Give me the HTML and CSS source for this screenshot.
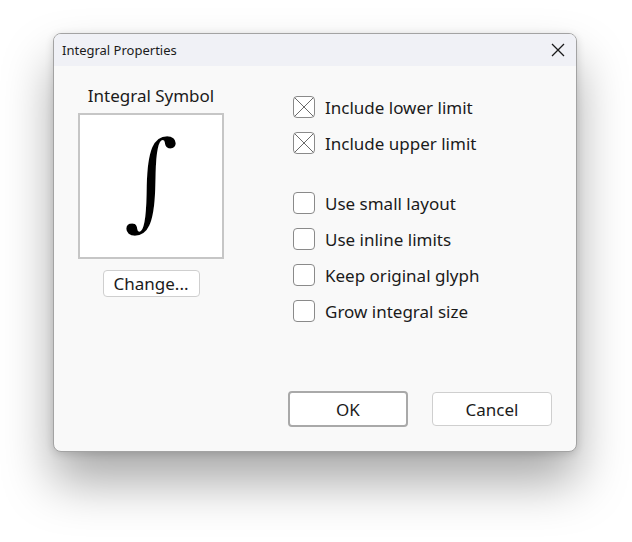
FILE: index.html
```html
<!DOCTYPE html>
<html lang="en">
<head>
  <meta charset="UTF-8" />
  <title>Integral Properties</title>
  <link rel="stylesheet" href="styles.css">
</head>
<body>

  <div class="stage">
    <div class="dialog">
      <div class="titlebar">
        <span class="title">Integral Properties</span>
        <button class="close" aria-label="Close">
          <svg width="14" height="14" viewBox="0 0 14 14">
            <path d="M1 1 L13 13 M13 1 L1 13" stroke="#1a1a1a" stroke-width="1.3" fill="none"/>
          </svg>
        </button>
      </div>

      <div class="content">
        <div class="symbol-col">
          <div class="symbol-label">Integral Symbol</div>
          <div class="symbol-box"><span class="glyph">&#8747;</span></div>
          <button class="btn small">Change...</button>
        </div>

        <div class="options">
          <div class="group">
            <label class="check"><span class="box checked"></span>Include lower limit</label>
            <label class="check"><span class="box checked"></span>Include upper limit</label>
          </div>
          <div class="group">
            <label class="check"><span class="box"></span>Use small layout</label>
            <label class="check"><span class="box"></span>Use inline limits</label>
            <label class="check"><span class="box"></span>Keep original glyph</label>
            <label class="check"><span class="box"></span>Grow integral size</label>
          </div>
        </div>
      </div>

      <div class="footer">
        <button class="btn wide default">OK</button>
        <button class="btn wide">Cancel</button>
      </div>
    </div>
  </div>

</body>
</html>
```

FILE: styles.css
```css
html, body {
  height: 100%;
}

body {
  margin: 0;
  background: #ffffff;
  font-family: "Noto Sans", "Open Sans", sans-serif;
  color: #1b1b1b;
}

.stage {
  min-height: 100%;
  box-sizing: border-box;
  padding: 33px 0 0 53px;
}

.dialog {
  width: 522px;
  height: 417px;
  border: 1px solid #a3a3a3;
  border-radius: 8px;
  background: #f9f9f9;
  box-shadow: 0 30px 50px rgba(0, 0, 0, 0.34), 0 2px 8px rgba(0, 0, 0, 0.14);
  display: flex;
  flex-direction: column;
  overflow: hidden;
}

.titlebar {
  height: 32px;
  background: #f0f1f6;
  display: flex;
  align-items: center;
  justify-content: space-between;
  padding: 0 10px 0 8px;
}

.title {
  font-size: 13px;
}

.close {
  border: none;
  background: none;
  padding: 0;
  width: 16px;
  height: 16px;
  display: flex;
  align-items: center;
  justify-content: center;
}

.content {
  display: flex;
  padding: 19px 0 0 24px;
  gap: 69px;
}

.symbol-col {
  width: 146px;
  display: flex;
  flex-direction: column;
  align-items: center;
}

.symbol-label {
  font-size: 17px;
  line-height: 22px;
  margin-bottom: 6px;
}

.symbol-box {
  width: 142px;
  height: 142px;
  border: 2px solid #c6c6c6;
  background: #ffffff;
  display: flex;
  align-items: center;
  justify-content: center;
}

/* the glyph sits a little low in its line box, lift it back to centre;
   the white stroke trims the heavy DejaVu weight down a bit */
.glyph {
  font-family: "DejaVu Serif", serif;
  font-style: italic;
  font-size: 108px;
  line-height: 1;
  color: #000000;
  -webkit-text-stroke: 1.8px #ffffff;
  margin-bottom: 12px;
}

.btn {
  font-family: inherit;
  font-size: 17px;
  color: #1b1b1b;
  background: #ffffff;
  border: 1px solid #cfcfcf;
  border-radius: 4px;
  cursor: pointer;
}

.btn.small {
  margin-top: 11px;
  width: 97px;
  height: 27px;
  padding: 0;
}

.options {
  display: flex;
  flex-direction: column;
  gap: 24px;
  padding-top: 4px;
}

.check {
  display: flex;
  align-items: center;
  gap: 10px;
  height: 36px;
  font-size: 17px;
}

.box {
  width: 22px;
  height: 22px;
  border: 1px solid #8a8a8a;
  border-radius: 4px;
  background: #ffffff;
  box-sizing: border-box;
}

.box.checked {
  background:
    linear-gradient(45deg, transparent calc(50% - 0.7px), #6a6a6a calc(50% - 0.7px), #6a6a6a calc(50% + 0.7px), transparent calc(50% + 0.7px)),
    linear-gradient(-45deg, transparent calc(50% - 0.7px), #6a6a6a calc(50% - 0.7px), #6a6a6a calc(50% + 0.7px), transparent calc(50% + 0.7px)),
    #ffffff;
}

.footer {
  margin-top: auto;
  display: flex;
  align-items: center;
  justify-content: flex-end;
  gap: 24px;
  padding: 0 24px 24px 0;
  height: 36px;
}

.btn.wide {
  width: 120px;
  height: 34px;
}

.btn.default {
  height: 36px;
  border: 2px solid #a9a9a9;
}
```
